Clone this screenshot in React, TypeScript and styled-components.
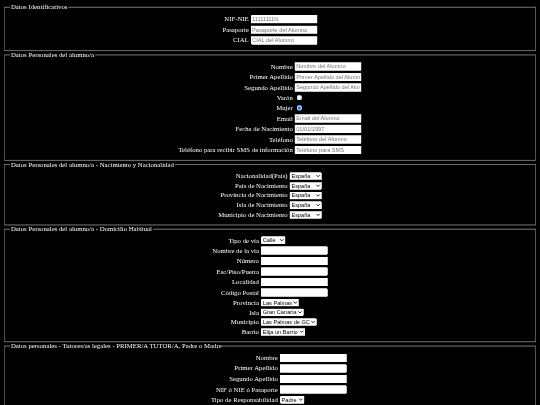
import React, { FC } from "react";
import styled, { createGlobalStyle } from "styled-components";

const GlobalStyle = createGlobalStyle`
  html, body {
    margin: 0;
    height: 405px;
    overflow: hidden;
    background: #000;
  }
`;

// the page is a 1280x960 one, photographed at 540x405
const Page = styled.form`
  box-sizing: border-box;
  width: 1280px;
  padding: 8px;
  transform: scale(0.421875);
  transform-origin: 0 0;
  filter: blur(0.5px);
  color: #fff;
  font-family: "Liberation Serif", "Times New Roman", serif;
  font-size: 16px;
`;

const Section = styled.fieldset`
  margin: 0 2px;
  padding: 5.6px 12px 10px;
  border: 2px groove #c0c0c0;
  min-width: 0;
`;

const FormTable = styled.table`
  margin: 0 auto;
`;

const Label = styled.td<{ $min?: number }>`
  min-width: ${({ $min }) => $min ?? 0}px;
  text-align: right;
  white-space: nowrap;
`;

const TextInput = styled.input`
  box-sizing: border-box;
  display: block;
  width: 159px;
  font-family: "Liberation Sans", Arial, sans-serif;
  font-size: 13.33px;
`;

const Dropdown = styled.select<{ $w: number }>`
  display: block;
  box-sizing: border-box;
  width: ${({ $w }) => $w}px;
  font-family: "Liberation Sans", Arial, sans-serif;
  font-size: 13.33px;
`;

const Radio = styled.input.attrs({ type: "radio" })`
  display: block;
  margin: 3px 3px 4px 5px;
`;

type Row =
  | { label: string; kind: "text"; placeholder?: string }
  | { label: string; kind: "radio"; checked?: boolean }
  | { label: string; kind: "select"; option: string; width: number };

const FormRows: FC<{ rows: Row[]; labelMin?: number }> = ({ rows, labelMin }) => (
  <FormTable>
    <tbody>
      {rows.map((row) => (
        <tr key={row.label}>
          <Label $min={labelMin}>{row.label}</Label>
          <td>
            {row.kind === "text" && <TextInput placeholder={row.placeholder} />}
            {row.kind === "radio" && <Radio name="sexo" defaultChecked={row.checked} />}
            {row.kind === "select" && (
              <Dropdown $w={row.width}>
                <option>{row.option}</option>
              </Dropdown>
            )}
          </td>
        </tr>
      ))}
    </tbody>
  </FormTable>
);

const identificativos: Row[] = [
  { label: "NIF-NIE", kind: "text", placeholder: "11111111N" },
  { label: "Pasaporte", kind: "text", placeholder: "Pasaporte del Alumno" },
  { label: "CIAL", kind: "text", placeholder: "CIAL del Alumno" },
];

const personales: Row[] = [
  { label: "Nombre", kind: "text", placeholder: "Nombre del Alumno" },
  { label: "Primer Apellido", kind: "text", placeholder: "Primer Apellido del Alumno" },
  { label: "Segundo Apellido", kind: "text", placeholder: "Segundo Apellido del Alumno" },
  { label: "Varón", kind: "radio" },
  { label: "Mujer", kind: "radio", checked: true },
  { label: "Email", kind: "text", placeholder: "Email del Alumno" },
  { label: "Fecha de Nacimiento", kind: "text", placeholder: "01/01/1997" },
  { label: "Teléfono", kind: "text", placeholder: "Teléfono del Alumno" },
  { label: "Teléfono para recibir SMS de información", kind: "text", placeholder: "Teléfono para SMS" },
];

const nacimiento: Row[] = [
  { label: "Nacionalidad(País)", kind: "select", option: "España", width: 77 },
  { label: "País de Nacimiento", kind: "select", option: "España", width: 77 },
  { label: "Provincia de Nacimiento", kind: "select", option: "España", width: 77 },
  { label: "Isla de Nacimiento", kind: "select", option: "España", width: 77 },
  { label: "Municipio de Nacimiento", kind: "select", option: "España", width: 77 },
];

const domicilio: Row[] = [
  { label: "Tipo de vía", kind: "select", option: "Calle", width: 59 },
  { label: "Nombre de la vía", kind: "text" },
  { label: "Número", kind: "text" },
  { label: "Esc/Piso/Puerta", kind: "text" },
  { label: "Localidad", kind: "text" },
  { label: "Código Postal", kind: "text" },
  { label: "Provincia", kind: "select", option: "Las Palmas", width: 91 },
  { label: "Isla", kind: "select", option: "Gran Canaria", width: 102 },
  { label: "Municipio", kind: "select", option: "Las Palmas de GC", width: 133 },
  { label: "Barrio", kind: "select", option: "Elija un Barrio", width: 106 },
];

const tutor: Row[] = [
  { label: "Nombre", kind: "text" },
  { label: "Primer Apellido", kind: "text" },
  { label: "Segundo Apellido", kind: "text" },
  { label: "NIF ó NIE ó Pasaporte", kind: "text" },
  { label: "Tipo de Responsabilidad", kind: "select", option: "Padre", width: 59 },
];

export default function App() {
  return (
    <>
      <GlobalStyle />
      <Page>
        <Section>
          <legend>Datos Identificativos</legend>
          <FormRows rows={identificativos} />
        </Section>
        <Section>
          <legend>Datos Personales del alumno/a</legend>
          <FormRows rows={personales} />
        </Section>
        <Section>
          <legend>Datos Personales del alumno/a - Nacimiento y Nacionalidad</legend>
          <FormRows rows={nacimiento} />
        </Section>
        <Section>
          <legend>Datos Personales del alumno/a - Domicilio Habitual</legend>
          <FormRows rows={domicilio} />
        </Section>
        <Section>
          <legend>Datos personales - Tutores/as legales - PRIMER/A TUTOR/A, Padre o Madre</legend>
          <FormRows rows={tutor} labelMin={200} />
        </Section>
      </Page>
    </>
  );
}
